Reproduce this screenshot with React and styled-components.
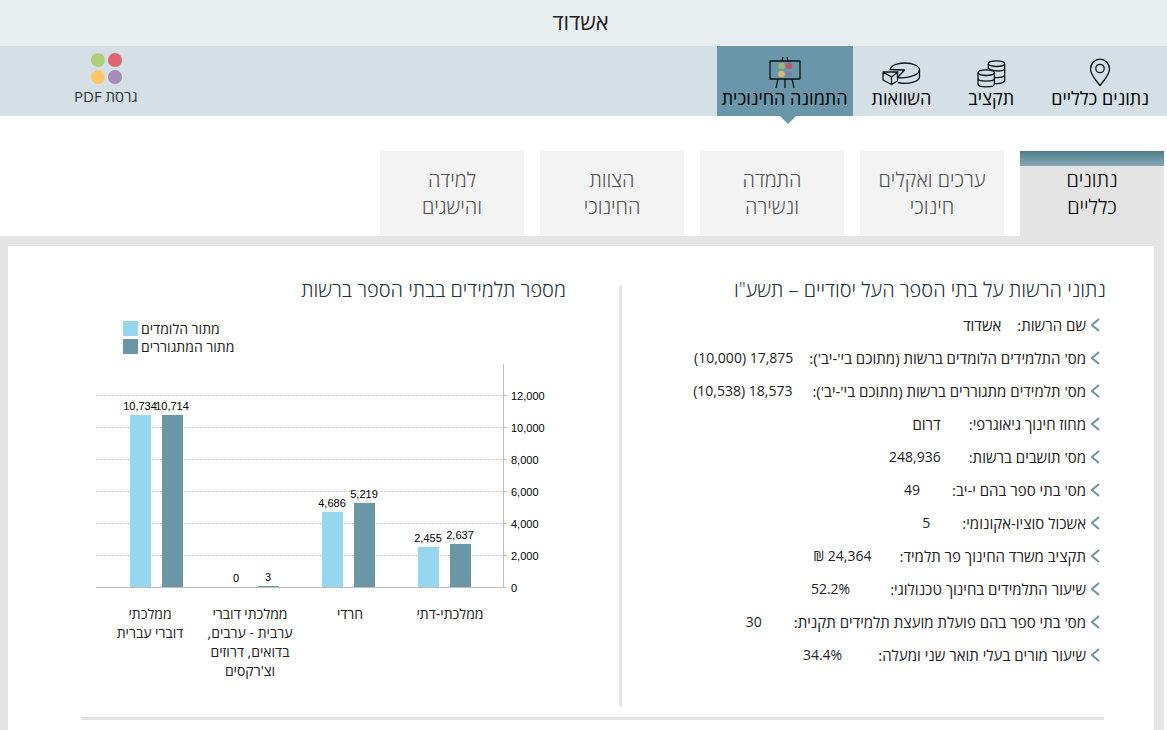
import React from 'react';
import styled, { createGlobalStyle } from 'styled-components';

const facts = [
    { label: 'שם הרשות:', value: 'אשדוד', gap: 16 },
    { label: "מס' התלמידים הלומדים ברשות (מתוכם בי'-יב'):", value: '17,875 (10,000)', gap: 16 },
    { label: "מס' תלמידים מתגוררים ברשות (מתוכם בי'-יב'):", value: '18,573 (10,538)', gap: 20 },
    { label: 'מחוז חינוך גיאוגרפי:', value: 'דרום', gap: 28 },
    { label: "מס' תושבים ברשות:", value: '248,936', gap: 28 },
    { label: "מס' בתי ספר בהם י-יב:", value: '49', gap: 32 },
    { label: 'אשכול סוציו-אקונומי:', value: '5', gap: 32 },
    { label: 'תקציב משרד החינוך פר תלמיד:', value: '24,364 ₪', gap: 28 },
    { label: 'שיעור התלמידים בחינוך טכנולוגי:', value: '52.2%', gap: 40 },
    { label: "מס' בתי ספר בהם פועלת מועצת תלמידים תקנית:", value: '30', gap: 32 },
    { label: 'שיעור מורים בעלי תואר שני ומעלה:', value: '34.4%', gap: 36 },
];

const tabs = [
    ['נתונים', 'כלליים'],
    ['ערכים ואקלים', 'חינוכי'],
    ['התמדה', 'ונשירה'],
    ['הצוות', 'החינוכי'],
    ['למידה', 'והישגים'],
];

const groups = [
    { learning: 10734, living: 10714, lines: ['ממלכתי', 'דוברי עברית'] },
    { learning: 0, living: 3, lines: ['ממלכתי דוברי', 'ערבית - ערבים,', 'בדואים, דרוזים', "וצ'רקסים"] },
    { learning: 4686, living: 5219, lines: ['חרדי'] },
    { learning: 2455, living: 2637, lines: ['ממלכתי-דתי'] },
];

const ticks = [0, 2000, 4000, 6000, 8000, 10000, 12000];

const LIGHT = '#96d7ee';
const DARK = '#6997a6';

function Dots() {
    return (
        <svg width="32" height="32" viewBox="0 0 32 32">
            <circle cx="8" cy="8" r="7" fill="#b0cf78" />
            <circle cx="25" cy="8" r="7" fill="#df6470" />
            <circle cx="8" cy="25" r="7" fill="#fdc66b" />
            <circle cx="25" cy="25" r="7" fill="#a58aba" />
        </svg>
    );
}

function PinIcon() {
    return (
        <Drawing width="22" height="31" viewBox="0 0 22 31">
            <path d="M11 27.5 C7.5 23 1.5 17 1.5 11 A9.5 9.8 0 0 1 20.5 11 C20.5 17 14.5 23 11 27.5 Z" />
            <circle cx="11" cy="10.5" r="4.2" />
        </Drawing>
    );
}

function CoinsIcon() {
    return (
        <Drawing width="30" height="31" viewBox="0 0 30 31">
            <ellipse cx="20.5" cy="5.7" rx="8.2" ry="2.8" />
            <path d="M12.3 5.7 V11 M28.7 5.7 V22.5 C28.7 24.5 24.5 26 19 25.5 M12.3 10 C15 13.5 27 14 28.7 11 M19 19.5 C24 20 28.7 19 28.7 16.8" />
            <ellipse cx="10.2" cy="14.7" rx="8.2" ry="2.8" />
            <path d="M2 14.7 V26 C2 29.8 18.4 29.8 18.4 26 V14.7 M2 20.3 C2 24.1 18.4 24.1 18.4 20.3" />
        </Drawing>
    );
}

function CakeIcon() {
    return (
        <Drawing width="39" height="28" viewBox="0 0 39 28">
            <path d="M8 8.5 C9 4.5 15 2 22.5 2 C31 2 37.5 5 37.5 9 C37.5 14 25 18 15.5 16.5 L22.5 9 Z" />
            <path d="M37.5 9 V16 C37.5 20.5 26 24 16 21.5" />
            <path d="M1 11 L16 11 L9.5 16 Z M1 11 V19 L9.5 23.5 V16 M9.5 23.5 L15.5 20 V11" />
        </Drawing>
    );
}

function EaselIcon() {
    return (
        <Drawing width="32" height="32" viewBox="0 0 32 32">
            <path d="M14 0 L13 4 M18 0 L19 4 M9 22 L7 31 M16 22 V31 M23 22 L25 31" />
            <rect x="1" y="4" width="30" height="18" />
            <g stroke="none">
                <circle cx="12.5" cy="9" r="3.3" fill="#97b873" />
                <circle cx="20" cy="9" r="3.3" fill="#b95967" />
                <circle cx="12.5" cy="17" r="3.3" fill="#dfb66d" />
                <circle cx="20" cy="17" r="3.3" fill="#7d7fae" />
            </g>
        </Drawing>
    );
}

function Chart() {
    const zero = 224;
    const toY = (v) => zero - (v * 32) / 2000;
    const heightOf = (v) => (v ? Math.max(1, Math.ceil(zero - toY(v))) : 0);

    return (
        <svg width="456" height="235" viewBox="0 0 456 235" direction="ltr" fontFamily="Liberation Sans, Arial, sans-serif" fontSize="11">
            {ticks.map((t) => (
                <g key={t}>
                    <path
                        d={`M0 ${toY(t) - 0.5} H408`}
                        stroke={t ? '#d6d6d6' : '#bdbdbd'}
                        strokeDasharray={t ? '3 1' : 'none'}
                    />
                    <path d={`M408 ${toY(t) - 0.5} H411`} stroke="#bdbdbd" />
                    <text x="415" y={toY(t) + 4}>{t.toLocaleString('en-US')}</text>
                </g>
            ))}
            <path d="M407.5 0 V224" stroke="#bdbdbd" />
            {groups.map((g, i) => {
                const x = 34 + i * 96;
                const a = heightOf(g.learning);
                const b = heightOf(g.living);
                return (
                    <g key={g.lines[0] + i} textAnchor="middle">
                        <rect x={x} y={zero - 1 - a} width="21" height={a} fill={LIGHT} />
                        <rect x={x + 32} y={zero - 1 - b} width="21" height={b} fill={DARK} />
                        <text x={x + 10} y={zero - 6 - a}>{g.learning.toLocaleString('en-US')}</text>
                        <text x={x + 42} y={zero - 6 - b}>{g.living.toLocaleString('en-US')}</text>
                    </g>
                );
            })}
        </svg>
    );
}

export default function App() {
    return (
        <Page dir="rtl" lang="he">
            <GlobalStyle />
            <CityBar>
                <City>אשדוד</City>
            </CityBar>
            <Nav>
                <NavItems>
                    <NavItem href="#general"><PinIcon />נתונים כלליים</NavItem>
                    <NavItem href="#budget"><CoinsIcon />תקציב</NavItem>
                    <NavItem href="#compare"><CakeIcon />השוואות</NavItem>
                    <NavItem href="#picture" $active><EaselIcon />התמונה החינוכית</NavItem>
                </NavItems>
                <PdfLink href="#pdf"><Dots />גרסת PDF</PdfLink>
            </Nav>
            <Main>
                <Tabs role="tablist">
                    {tabs.map(([first, second], i) => (
                        <Tab key={first} role="tab" aria-selected={i === 0} $active={i === 0}>
                            <span>{first}</span>
                            <span>{second}</span>
                        </Tab>
                    ))}
                </Tabs>
                <Panel>
                    <Columns>
                        <FactsColumn>
                            <Title>נתוני הרשות על בתי הספר העל יסודיים – תשע"ו</Title>
                            <Facts>
                                {facts.map((f) => (
                                    <Fact key={f.label}>
                                        <Arrow width="9" height="14" viewBox="0 0 9 14"><path d="M8 1 L1 7 L8 13" /></Arrow>
                                        <Label $gap={f.gap}>{f.label}</Label>
                                        <Value $numeric={/\d/.test(f.value)}>{f.value}</Value>
                                    </Fact>
                                ))}
                            </Facts>
                        </FactsColumn>
                        <ChartColumn>
                            <Title>מספר תלמידים בבתי הספר ברשות</Title>
                            <ChartBox>
                                <Legend>
                                    <LegendItem><Swatch $color={LIGHT} />מתור הלומדים</LegendItem>
                                    <LegendItem><Swatch $color={DARK} />מתור המתגוררים</LegendItem>
                                </Legend>
                                <Chart />
                                <Categories>
                                    {groups.map((g) => (
                                        <Category key={g.lines.join()}>
                                            {g.lines.map((line) => <span key={line}>{line}</span>)}
                                        </Category>
                                    ))}
                                </Categories>
                            </ChartBox>
                        </ChartColumn>
                    </Columns>
                </Panel>
            </Main>
        </Page>
    );
}

const GlobalStyle = createGlobalStyle`
    body {
        margin: 0;
        background-color: #FFFFFF;
    }
    * {
        box-sizing: border-box;
    }
`
const Page = styled.div`
    min-height: 100vh;
    display: flex;
    flex-direction: column;
    font-family: 'Open Sans', 'Liberation Sans', sans-serif;
    color: #222222;
`
const CityBar = styled.header`
    height: 46px;
    background-color: #E8EDEF;
    display: flex;
    justify-content: center;
    align-items: center;
    padding: 0 6px 4px 0;
`
const City = styled.h1`
    margin: 0;
    font-size: 22px;
    font-weight: 400;
`
const Nav = styled.nav`
    height: 70px;
    background-color: #D4E0E5;
    display: flex;
    justify-content: space-between;
`
const NavItems = styled.div`
    display: flex;
    gap: 1px;
`
const NavItem = styled.a`
    position: relative;
    display: flex;
    flex-direction: column;
    justify-content: flex-end;
    align-items: center;
    padding: 0 ${({ $active }) => ($active ? '5px' : '18px')} 9px;
    background-color: ${({ $active }) => ($active ? '#6997A9' : 'transparent')};
    color: #000000;
    font-size: 18px;
    line-height: 18px;
    text-decoration: none;
    white-space: nowrap;

    &::after {
        content: '';
        display: ${({ $active }) => ($active ? 'block' : 'none')};
        position: absolute;
        top: 100%;
        left: calc(50% - 5px);
        border: 8px solid transparent;
        border-top-color: #6997A9;
        border-bottom: 0;
    }
`
const Drawing = styled.svg`
    fill: none;
    stroke: #0B1418;
    stroke-width: 1.3;
    stroke-linejoin: round;
`
const PdfLink = styled.a`
    display: flex;
    flex-direction: column;
    align-items: center;
    padding-top: 6px;
    margin-left: 74px;
    color: #333333;
    font-size: 15px;
    line-height: 24px;
    text-decoration: none;
`
const Main = styled.main`
    flex: 1;
    display: flex;
    flex-direction: column;
    margin: 35px 3px 0 0;
`
const Tabs = styled.div`
    display: flex;
    gap: 16px;
`
const Tab = styled.button`
    width: 144px;
    height: 85px;
    padding: 0 0 2px;
    display: flex;
    flex-direction: column;
    justify-content: center;
    align-items: center;
    border: 0;
    background: ${({ $active }) => ($active
        ? 'linear-gradient(#4F7C8A, #86AAB7) 0 0 / 100% 15px no-repeat #E4E4E4'
        : '#F3F3F3')};
    color: ${({ $active }) => ($active ? '#000000' : '#555555')};
    font-family: inherit;
    font-size: 20px;
    font-weight: 300;
    line-height: 27px;
`
const Panel = styled.section`
    flex: 1;
    border: 10px solid #E4E4E4;
    border-left-width: 8px;
    border-bottom: 0;
    padding: 30px 50px 0 73px;
`
const Columns = styled.div`
    display: flex;
    border-bottom: 3px solid #E4E4E4;
    padding: 10px 0 11px;
`
const FactsColumn = styled.div`
    flex: 1;
    min-height: 420px;
    border-left: 3px solid #E4E4E4;
`
const ChartColumn = styled.div`
    width: 538px;
    padding-right: 55px;
`
const Title = styled.h2`
    margin: -10px -2px 0 0;
    font-size: 20px;
    line-height: 28px;
    font-weight: 300;
    color: #1F3540;
    white-space: nowrap;
`
const Facts = styled.ul`
    list-style: none;
    margin: 4px 0 0;
    padding: 0;
`
const Fact = styled.li`
    display: flex;
    align-items: center;
    height: 33px;
    padding-right: 4px;
    font-size: 15px;
    white-space: nowrap;
`
const Arrow = styled.svg`
    fill: none;
    stroke: #6F93A0;
    stroke-width: 2;
`
const Label = styled.span`
    margin-right: 5px;
    margin-left: ${({ $gap }) => $gap}px;
`
const Value = styled.span`
    font-size: ${({ $numeric }) => ($numeric ? '14px' : '15px')};
`
const ChartBox = styled.div`
    width: 471px;
    margin-right: auto;
    padding-left: 15px;
`
const Legend = styled.div`
    direction: ltr;
    display: flex;
    flex-direction: column;
    padding: 15px 0 9px 27px;
`
const LegendItem = styled.div`
    display: flex;
    align-items: center;
    gap: 3px;
    height: 18px;
    font-size: 14px;
`
const Swatch = styled.span`
    width: 15px;
    height: 15px;
    background-color: ${({ $color }) => $color};
`
const Categories = styled.div`
    direction: ltr;
    display: flex;
    width: 404px;
    margin-right: auto;
    padding-left: 4px;
`
const Category = styled.div`
    flex: 1;
    display: flex;
    flex-direction: column;
    align-items: center;
    direction: rtl;
    font-size: 14px;
    line-height: 19px;
    white-space: nowrap;
`
